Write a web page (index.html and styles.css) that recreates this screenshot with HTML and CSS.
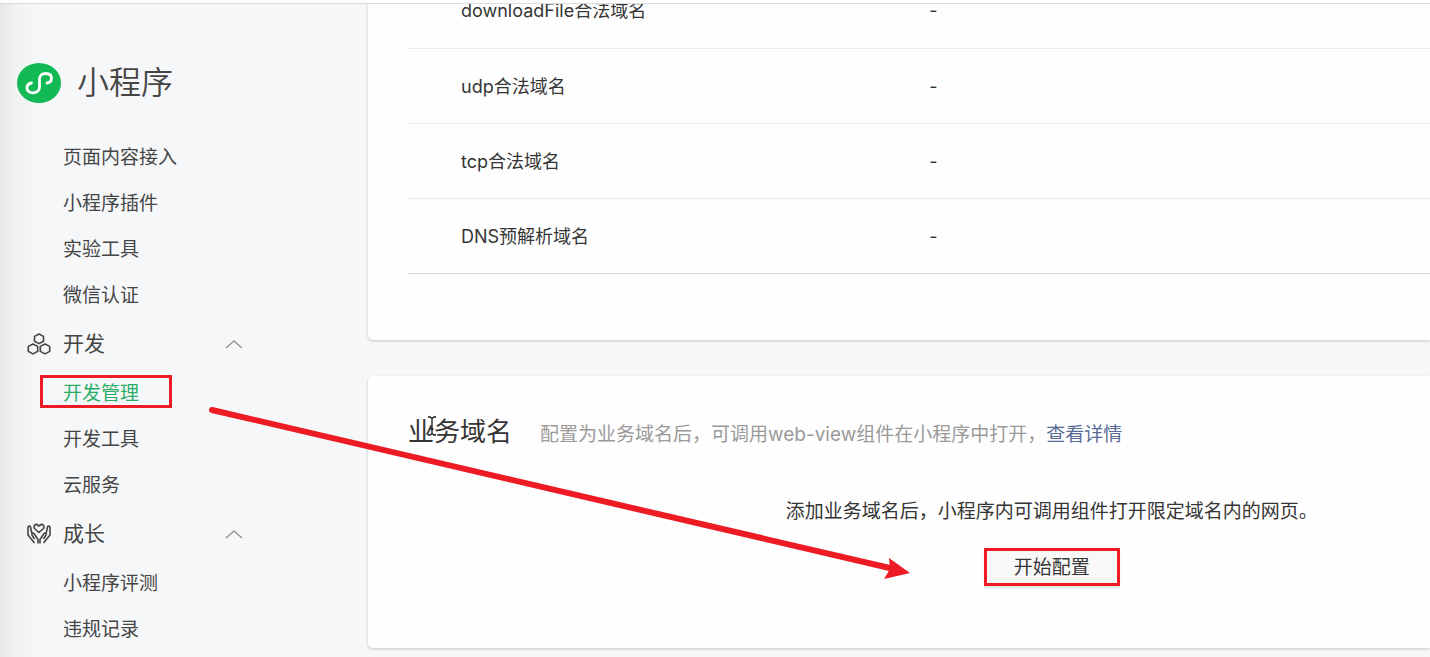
FILE: index.html
```html
<!DOCTYPE html>
<html lang="zh-CN">
<head>
    <meta charset="UTF-8">
    <meta name="viewport" content="width=device-width, initial-scale=1.0">
    <title>小程序</title>
    <link rel="stylesheet" href="styles.css">
</head>
<body>
    <div class="topbar"></div>
    <div class="page">
        <aside class="sidebar">
            <div class="brand">
                <svg class="brand-logo" viewBox="0 0 44 40" aria-hidden="true">
                    <ellipse cx="22" cy="20" rx="22" ry="20" fill="#12b955"/>
                    <path d="M14.500 20C11.500 20.500 10 22.500 10 25c0 3 2.500 4.800 5.800 4.800 4 0 6.700-2.300 6.700-5.800v-8c0-3.500 2.500-5.500 6-5.500 3.700 0 6 1.800 6 4.700 0 2.800-1.500 4.300-4.500 4.800" fill="none" stroke="#fff" stroke-width="2.800" stroke-linecap="round"/>
                </svg>
                <span class="brand-name">小程序</span>
            </div>
            <nav>
                <ul class="menu">
                    <li><a href="#">页面内容接入</a></li>
                    <li><a href="#">小程序插件</a></li>
                    <li><a href="#">实验工具</a></li>
                    <li><a href="#">微信认证</a></li>
                </ul>
                <button class="menu-title" type="button">
                    <svg class="menu-icon" viewBox="0 0 24 22" aria-hidden="true">
                        <path d="M12 1l4.500 2.400v4.800L12 10.600 7.500 8.200V3.400zM6 11l4.700 2.400v5L6 20.900l-4.700-2.500v-5zM18 11l4.700 2.400v5L18 20.900l-4.700-2.500v-5z"/>
                    </svg>
                    <span>开发</span>
                    <svg class="menu-arrow" viewBox="0 0 18 10" aria-hidden="true"><path d="M1 9l8-7 8 7"/></svg>
                </button>
                <ul class="menu">
                    <li class="active"><a href="#">开发管理</a></li>
                    <li><a href="#">开发工具</a></li>
                    <li><a href="#">云服务</a></li>
                </ul>
                <button class="menu-title" type="button">
                    <svg class="menu-icon" viewBox="0 0 24 22" aria-hidden="true">
                        <path d="M12 9.500L7.500 5.500C6 3.500 8 1 10 1.500l2 1.500 2-1.500c2-.5 4 2 2.500 4z"/>
                        <path d="M11 20.500v-4L7 10.500c-1-1-2.500 0-2 1.500l2.500 4M5 11L3.500 4C3 2.500 1 3 1 4.500V12l6.500 8M13 20.500v-4l4-6c1-1 2.500 0 2 1.500l-2.500 4M19 11l1.500-7c.5-1.500 2.500-1 2.500.5V12l-6.500 8"/>
                    </svg>
                    <span>成长</span>
                    <svg class="menu-arrow" viewBox="0 0 18 10" aria-hidden="true"><path d="M1 9l8-7 8 7"/></svg>
                </button>
                <ul class="menu">
                    <li><a href="#">小程序评测</a></li>
                    <li><a href="#">违规记录</a></li>
                </ul>
            </nav>
        </aside>

        <main class="main">
            <section class="card card-server">
                <table class="domains">
                    <tbody>
                        <tr><th scope="row">downloadFile合法域名</th><td>-</td></tr>
                        <tr><th scope="row">udp合法域名</th><td>-</td></tr>
                        <tr><th scope="row">tcp合法域名</th><td>-</td></tr>
                        <tr><th scope="row">DNS预解析域名</th><td>-</td></tr>
                    </tbody>
                </table>
            </section>

            <section class="card card-business">
                <header class="card-head">
                    <h2>业务域名</h2>
                    <p>配置为业务域名后，可调用web-view组件在小程序中打开，<a href="#">查看详情</a></p>
                </header>
                <div class="empty">
                    <p>添加业务域名后，小程序内可调用组件打开限定域名内的网页。</p>
                    <button class="btn" type="button">开始配置</button>
                </div>
            </section>
        </main>
    </div>

    <svg class="pointer" viewBox="0 0 10 20" aria-hidden="true">
        <path d="M1 1h2l2 1.500L7 1h2M5 2.500v15M1 19h2l2-1.500L7 19h2M3.500 13h3"/>
    </svg>
    <svg class="guide-arrow" viewBox="0 0 702 172" aria-hidden="true">
        <path d="M4 5L686 164" stroke="#ed1c24" stroke-width="6" stroke-linecap="round"/>
        <path d="M702 168L681 153l1 11-6 10z" fill="#ed1c24"/>
    </svg>
</body>
</html>
```
FILE: styles.css
```css
*,
*::before {
    box-sizing: border-box;
}
body {
    margin: 0;
    height: 100vh;
    overflow: hidden;
    background: #f6f7f9;
    color: #353535;
    font-family: Inter, "Noto Sans CJK SC", sans-serif;
    font-size: 19px;
    line-height: 28px;
}
h2, p, ul {
    margin: 0;
    padding: 0;
}
a {
    color: inherit;
    text-decoration: none;
}
button {
    font: inherit;
    color: inherit;
    cursor: pointer;
}
.topbar {
    position: relative;
    z-index: 2;
    height: 4px;
    background: #fff;
    border-bottom: 1px solid #dcdddf;
}
.page {
    display: flex;
}

/* sidebar */
.sidebar {
    flex: none;
    width: 368px;
    height: calc(100vh - 4px);
    padding-top: 54px;
    color: #454545;
    background: linear-gradient(to right, #e6e7e9, #f1f2f4 16px, #f6f7f9 40px);
}
.brand {
    display: flex;
    align-items: center;
    gap: 16px;
    height: 50px;
    padding-left: 17px;
    margin-bottom: 26px;
}
.brand-logo {
    width: 44px;
    height: 40px;
}
.brand-name {
    font-size: 32px;
    font-weight: 350;
    line-height: 50px;
}
.menu {
    list-style: none;
}
.menu li {
    position: relative;
}
.menu a {
    display: block;
    padding-top: 2px;
    padding-left: 63px;
    line-height: 44px;
}
.menu .active {
    color: #2aae67;
}
.menu .active::before {
    content: '';
    position: absolute;
    top: 5px;
    left: 40px;
    width: 132px;
    height: 33px;
    border: 3px solid #ed1c24;
    pointer-events: none;
}
.menu-title {
    display: flex;
    align-items: center;
    width: 243px;
    height: 52px;
    padding: 0 0 0 27px;
    border: 0;
    background: none;
    font-size: 21px;
}
.menu-icon {
    width: 24px;
    height: 22px;
    margin-right: 12px;
    fill: none;
    stroke: #454545;
    stroke-width: 1.6;
    stroke-linejoin: round;
}
.menu-arrow {
    width: 18px;
    height: 10px;
    margin-left: auto;
    fill: none;
    stroke: #999;
    stroke-width: 1.6;
}

/* content */
.main {
    flex: 1;
    min-width: 0;
}
.card {
    padding: 0 0 0 40px;
    background: #fefefe;
    border-radius: 5px 0 0 5px;
    box-shadow: 0 1px 3px rgba(0, 0, 0, 0.2);
}
.card-server {
    padding-bottom: 66px;
    margin-bottom: 36px;
    border-radius: 0 0 0 5px;
}
.domains {
    width: 100%;
    margin-top: -31px;
    border-collapse: collapse;
    table-layout: fixed;
}
.domains th,
.domains td {
    height: 75px;
    padding: 2px 0 0;
    border-bottom: 1px solid #ebebeb;
    font-size: 18px;
    font-weight: 400;
    text-align: left;
}
.domains th {
    width: 51%;
    padding-left: 53px;
}
.domains tr:last-child > * {
    border-bottom-color: #dcdcdc;
}
.card-business {
    padding-top: 36px;
    padding-bottom: 62px;
}
.card-head {
    display: flex;
    align-items: baseline;
    gap: 28px;
}
.card-head h2 {
    font-size: 26px;
    font-weight: 400;
    line-height: 40px;
}
.card-head p {
    color: #9a9a9a;
}
.card-head a {
    color: #576b95;
}
.empty {
    display: flex;
    flex-direction: column;
    align-items: center;
    gap: 22px;
    padding-top: 46px;
    padding-left: 26%;
}
.btn {
    padding: 3px 27px 1px;
    border: 3px solid #ed1c24;
    background: #f8f8f8;
    box-shadow: 0 2px 2px rgba(0, 0, 0, 0.1);
}

/* marks drawn over the page */
.pointer {
    position: absolute;
    top: 416px;
    left: 427px;
    width: 10px;
    height: 20px;
    fill: none;
    stroke: #111;
    stroke-width: 1.3;
}
.guide-arrow {
    position: absolute;
    top: 405px;
    left: 208px;
    width: 702px;
    height: 172px;
    overflow: visible;
    pointer-events: none;
}
```
